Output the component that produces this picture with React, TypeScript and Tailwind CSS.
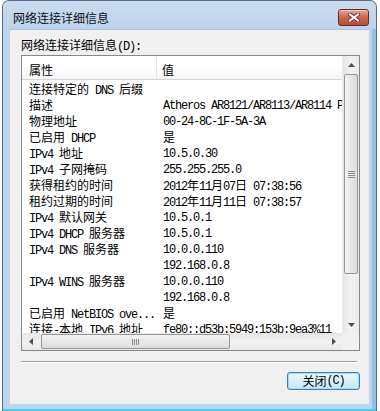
import React from "react";

const CJK = /([\u2e80-\u9fff\uff00-\uffef]+)/;

// SimSun-like mix: CJK runs at full width, latin runs squeezed to a 6px cell
function Txt({ s }: { s: string }) {
    return (
        <>
            {s.split(CJK).map((part, i) => {
                if (!part) return null;
                return CJK.test(part) ? (
                    <span key={i} className="font-['Noto_Sans_CJK_SC',sans-serif]">
                        {part}
                    </span>
                ) : (
                    <span key={i} className="font-['Liberation_Mono',monospace] tracking-[-1.2px]">
                        {part}
                    </span>
                );
            })}
        </>
    );
}

const rows: [string, string][] = [
    ["连接特定的 DNS 后缀", ""],
    ["描述", "Atheros AR8121/AR8113/AR8114 PCI-E Ethernet Controller"],
    ["物理地址", "00-24-8C-1F-5A-3A"],
    ["已启用 DHCP", "是"],
    ["IPv4 地址", "10.5.0.30"],
    ["IPv4 子网掩码", "255.255.255.0"],
    ["获得租约的时间", "2012年11月07日 07:38:56"],
    ["租约过期的时间", "2012年11月11日 07:38:57"],
    ["IPv4 默认网关", "10.5.0.1"],
    ["IPv4 DHCP 服务器", "10.5.0.1"],
    ["IPv4 DNS 服务器", "10.0.0.110"],
    ["", "192.168.0.8"],
    ["IPv4 WINS 服务器", "10.0.0.110"],
    ["", "192.168.0.8"],
    ["已启用 NetBIOS ove...", "是"],
    ["连接-本地 IPv6 地址", "fe80::d53b:5949:153b:9ea3%11"],
];

function Arrow({ dir }: { dir: "up" | "down" | "left" | "right" }) {
    const pts = {
        up: "3.5,0 7,4 0,4",
        down: "0,0 7,0 3.5,4",
        left: "4,0 4,7 0,3.5",
        right: "0,0 4,3.5 0,7",
    }[dir];
    const vertical = dir === "up" || dir === "down";
    return (
        <svg width={vertical ? 7 : 4} height={vertical ? 4 : 7}>
            <polygon points={pts} fill="#4f4f4f" />
        </svg>
    );
}

function CloseButton() {
    return (
        <div className="mt-[8px] w-[31px] h-[17px] rounded-[3px] border border-[#5e2e2a] bg-gradient-to-b from-[#e9a898] via-[#d0644f] to-[#c24a32] flex items-center justify-center shadow-[inset_0_1px_0_#f3c6bb]">
            <svg width="12" height="9" viewBox="0 0 12 9">
                <path d="M2 1.5 L10 7.5 M10 1.5 L2 7.5" stroke="#6b3a34" strokeWidth="4" strokeLinecap="square" />
                <path d="M2 1.5 L10 7.5 M10 1.5 L2 7.5" stroke="#ffffff" strokeWidth="2" strokeLinecap="square" />
            </svg>
        </div>
    );
}

function VScrollbar() {
    return (
        <div className="w-[17px] shrink-0 flex flex-col bg-gradient-to-r from-[#e6e6e6] via-[#f2f2f2] to-[#e9e9e9] border-l border-[#eaeaea]">
            <div className="h-[17px] flex items-center justify-center">
                <Arrow dir="up" />
            </div>
            <div className="mt-[1px] mx-[1px] h-[200px] rounded-[2px] border border-[#979797] bg-gradient-to-r from-[#f4f4f4] to-[#dcdcdc] flex flex-col items-center justify-center gap-[1px]">
                <div className="w-[7px] h-[1px] bg-[#8a8a8a]" />
                <div className="w-[7px] h-[1px] bg-[#8a8a8a]" />
                <div className="w-[7px] h-[1px] bg-[#8a8a8a]" />
                <div className="w-[7px] h-[1px] bg-[#8a8a8a]" />
            </div>
            <div className="flex-1" />
            <div className="h-[17px] flex items-center justify-center">
                <Arrow dir="down" />
            </div>
        </div>
    );
}

function HScrollbar() {
    return (
        <div className="h-[17px] flex-1 flex bg-gradient-to-b from-[#e6e6e6] via-[#f2f2f2] to-[#e9e9e9]">
            <div className="w-[17px] flex items-center justify-center">
                <Arrow dir="left" />
            </div>
            <div className="ml-[2px] my-[1px] w-[189px] rounded-[2px] border border-[#979797] bg-gradient-to-b from-[#f4f4f4] to-[#dcdcdc] flex items-center justify-center gap-[1px]">
                <div className="w-[1px] h-[6px] bg-[#8a8a8a]" />
                <div className="w-[1px] h-[6px] bg-[#8a8a8a]" />
                <div className="w-[1px] h-[6px] bg-[#8a8a8a]" />
                <div className="w-[1px] h-[6px] bg-[#8a8a8a]" />
            </div>
            <div className="flex-1" />
            <div className="w-[17px] flex items-center justify-center">
                <Arrow dir="right" />
            </div>
        </div>
    );
}

export default function App() {
    return (
        <div className="w-[380px] h-[411px] bg-white overflow-hidden text-[12px] text-black">
            <div className="ml-[2px] w-[375px] h-[411px] rounded-t-[7px] border border-b-0 border-[#5a6b7f] bg-[#bfd5ed] shadow-[inset_-4px_0_0_#94bfec] flex flex-col">
                <div className="h-[28px] flex items-start justify-between pl-[10px] pr-[7px] rounded-t-[6px] bg-gradient-to-b from-[#c9dcf1] to-[#bcd3ec]">
                    <span className="mt-[9px] leading-[16px] font-['Noto_Sans_CJK_SC',sans-serif] text-[#111]">
                        网络连接详细信息
                    </span>
                    <CloseButton />
                </div>

                <div className="mx-[7px] h-[375px] bg-[#f0f0f0] border-t border-[#aec3da] flex flex-col">
                    <div className="ml-[11px] mt-[7px] h-[16px] leading-[16px] whitespace-pre">
                        <Txt s="网络连接详细信息(D):" />
                    </div>

                    <div className="ml-[11px] mt-[2px] w-[339px] h-[296px] border border-[#828790] bg-white flex flex-col">
                        <div className="h-[277px] flex">
                            <div className="w-[320px] overflow-hidden">
                                <div className="h-[24px] flex border-b border-[#d5d5d5] bg-gradient-to-b from-white via-white to-[#f3f4f6]">
                                    <div className="w-[135px] border-r border-[#e3e5e8] pl-[7px] pt-[6px] leading-[16px]">
                                        <Txt s="属性" />
                                    </div>
                                    <div className="pl-[5px] pt-[6px] leading-[16px]">
                                        <Txt s="值" />
                                    </div>
                                </div>
                                <div className="pt-[1px]">
                                    {rows.map(([name, value], i) => (
                                        <div key={i} className="h-[16px] leading-[16px] flex pl-[7px] whitespace-pre">
                                            <div className="w-[134px] shrink-0">
                                                <Txt s={name} />
                                            </div>
                                            <div className="shrink-0">
                                                <Txt s={value} />
                                            </div>
                                        </div>
                                    ))}
                                </div>
                            </div>
                            <VScrollbar />
                        </div>
                        <div className="flex">
                            <HScrollbar />
                            <div className="w-[17px] h-[17px] bg-[#f0f0f0]" />
                        </div>
                    </div>

                    <div className="ml-[11px] mt-[10px] w-[336px] h-[2px] border-t border-[#a0a0a0] border-b border-b-white" />

                    <div className="mt-[9px] ml-[277px] w-[73px] h-[18px] rounded-[3px] border border-[#3c7fb1] bg-gradient-to-b from-[#eaf6fd] via-[#d9f0fc] to-[#bee6fd] shadow-[inset_0_0_0_1px_#a7d9f5] flex items-center justify-center leading-[16px] whitespace-pre">
                        <Txt s="关闭(C)" />
                    </div>
                </div>

                <div className="flex-1" />
                <div className="h-[2px] bg-[#3dd2f2]" />
            </div>
        </div>
    );
}
